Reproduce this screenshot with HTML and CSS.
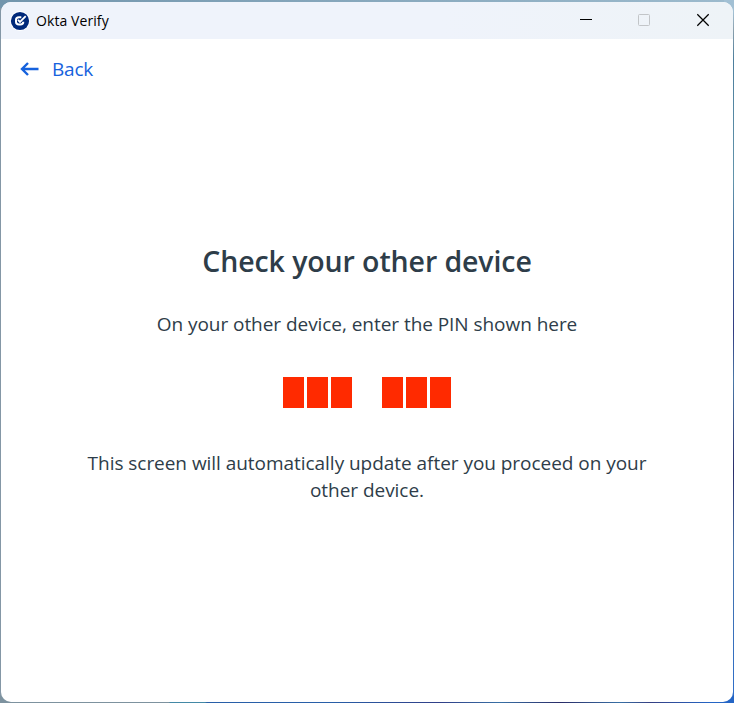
FILE: index.html
```
<!DOCTYPE html>
<html lang="en">
<head>
<meta charset="utf-8">
<title>Okta Verify</title>
<link rel="stylesheet" href="styles.css">
</head>
<body>
<div class="window">
  <header class="titlebar">
    <svg class="logo" width="20" height="20" viewBox="0 0 20 20" fill="none">
      <circle cx="10" cy="10" r="10" fill="#fff"/>
      <circle cx="10" cy="10" r="9.1" fill="#00297a"/>
      <path d="M11.3 6.3H9Q6 6.3 6 9V10.8Q6 13.6 9 13.6H10.4Q13.3 13.6 13.3 10.8" stroke="#fff" stroke-width="2"/>
      <path d="M8 8.8L10 10.9L15.7 5.2" stroke="#fff" stroke-width="1.8"/>
    </svg>
    <span class="app-name">Okta Verify</span>
    <div class="controls">
      <svg width="58" height="38" viewBox="0 0 58 38"><path d="M21 17.5H33" stroke="#000"/></svg>
      <svg width="58" height="38" viewBox="0 0 58 38"><rect x="21.5" y="12.5" width="11" height="11" rx="1" fill="none" stroke="#c2c5c8"/></svg>
      <svg width="58" height="38" viewBox="0 0 58 38"><path d="M22.3 12.3L33.7 23.7M33.7 12.3L22.3 23.7" stroke="#000" stroke-width="1.25"/></svg>
    </div>
  </header>
  <nav class="back">
    <svg width="19" height="14" viewBox="0 0 19 14" fill="none" stroke="#1662dd" stroke-width="2.4"><path d="M18.5 7H2M8 1L2 7L8 13"/></svg>
    <a class="back-label">Back</a>
  </nav>
  <main class="content">
    <h1>Check your other device</h1>
    <p class="hint">On your other device, enter the PIN shown here</p>
    <div class="pin">
      <div class="group"><i></i><i></i><i></i></div>
      <div class="group"><i></i><i></i><i></i></div>
    </div>
    <p class="note">This screen will automatically update after you proceed on your<br>other device.</p>
  </main>
</div>
</body>
</html>
```
FILE: styles.css
```
* { box-sizing: border-box; }
body {
  margin: 0;
  width: 734px;
  height: 703px;
  overflow: hidden;
  padding: 2px 1px 1px;
  background:
    linear-gradient(90deg, #7d929f 0 169px, #4389a6 170px 205px, #285fa8 207px 330px, #303f88 440px, #3870a5 500px, #292c68 560px, #3870a5 620px, #353f82 650px, #2465c5 710px) 0 695px / 734px 8px no-repeat,
    linear-gradient(#a2c0d4 0 12px, #8ba0ad 30px, #4c7e9d 60px, #6294ab 180px, #365f98 255px, #323c81 330px, #4a78a7 380px, #292c68 470px, #4774aa 550px, #2c6dca 703px) 724px 0 / 10px 695px no-repeat,
    linear-gradient(90deg, #7295ac, #9cbacd) 0 0 / 724px 8px no-repeat,
    #8497a6;
  font-family: "Open Sans", "Noto Sans", sans-serif;
  color: #2e3d49;
}
.window {
  height: 700px;
  border-radius: 10px;
  background: #fff;
  overflow: hidden;
  width: 732px;
}
.titlebar {
  height: 37px;
  background: linear-gradient(90deg, #eff3fb 0 60%, #eef3f7);
  display: flex;
  align-items: center;
  padding-left: 9px;
}
.app-name {
  margin-left: 6px;
  font-size: 14px;
  letter-spacing: 0.08px;
  color: #000;
}
.controls { display: flex; margin-left: auto; }
.back {
  display: flex;
  align-items: center;
  height: 60px;
  padding-left: 19px;
  color: #1662dd;
}
.back-label { font-size: 19px; letter-spacing: -0.2px; margin-left: 13px; }
.content {
  display: flex;
  flex-direction: column;
  align-items: center;
  padding-top: 142px;
  white-space: nowrap;
}
h1, p { margin: 0; }
h1 { font-size: 28.5px; font-weight: 600; line-height: 40px; letter-spacing: -0.1px; }
.hint { font-size: 19px; line-height: 27px; margin-top: 30px; letter-spacing: -0.05px; }
.pin { display: flex; gap: 30px; margin-top: 39px; }
.group { display: flex; gap: 3px; }
.group i { width: 21px; height: 31px; background: #ff2a00; }
.note { font-size: 19px; line-height: 27px; margin-top: 42px; text-align: center; letter-spacing: -0.04px; }
```
